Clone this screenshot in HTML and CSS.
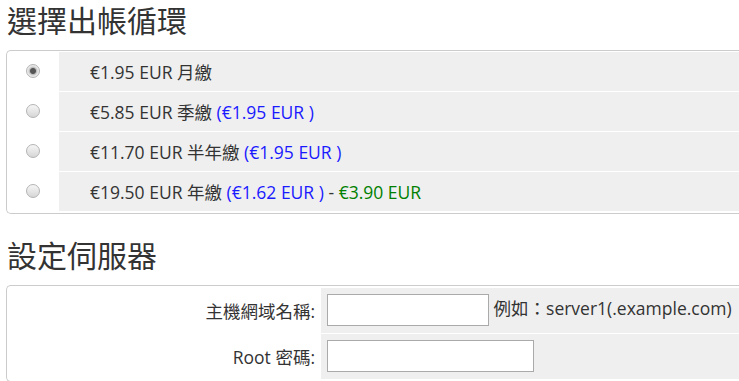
FILE: index.html
```html
<!DOCTYPE html>
<html>
<head>
	<title>Configure</title>
	<link rel="stylesheet" href="styles.css">
</head>
<body>
	<div class="page">
		<h2 class="title">選擇出帳循環</h2>
		<div class="cartbox">
			<label class="cycle">
				<span class="pick"><input type="radio" name="billingcycle" checked></span>
				<span class="desc">€1.95 EUR 月繳</span>
			</label>
			<label class="cycle">
				<span class="pick"><input type="radio" name="billingcycle"></span>
				<span class="desc">€5.85 EUR 季繳 <span class="permonth">(€1.95 EUR )</span></span>
			</label>
			<label class="cycle">
				<span class="pick"><input type="radio" name="billingcycle"></span>
				<span class="desc">€11.70 EUR 半年繳 <span class="permonth">(€1.95 EUR )</span></span>
			</label>
			<label class="cycle">
				<span class="pick"><input type="radio" name="billingcycle"></span>
				<span class="desc">€19.50 EUR 年繳 <span class="permonth">(€1.62 EUR )</span> - <span class="saving">€3.90 EUR</span></span>
			</label>
		</div>

		<h2 class="title second">設定伺服器</h2>
		<div class="cartbox serverbox">
			<div class="field-row">
				<label class="fieldlabel">主機網域名稱:</label>
				<div class="fieldarea"><input type="text" class="hostname"> 例如：server1(.example.com)</div>
			</div>
			<div class="field-row">
				<label class="fieldlabel">Root 密碼:</label>
				<div class="fieldarea"><input type="password" class="rootpw"></div>
			</div>
		</div>
	</div>
</body>
</html>
```

FILE: styles.css
```css
html, body {
	margin: 0;
	overflow: hidden;
}

body {
	background-color: #fff;
	color: #333;
	font-family: "Open Sans", "Noto Sans CJK TC", sans-serif;
	font-size: 17.5px;
}

.page {
	padding-left: 6px;
}

.title {
	margin: 3px 0 11px 1px;
	font-size: 30px;
	font-weight: normal;
	line-height: 36px;
	color: #333;
}

.title.second {
	margin-top: 24px;
}

.cartbox {
	border: 1px solid #ccc;
	border-right: none;
	border-radius: 5px 0 0 5px;
	padding: 1px 0 2px 0;
	display: flex;
	flex-direction: column;
	gap: 1px;
}

.cycle {
	display: flex;
	height: 39px;
}

.pick {
	width: 52px;
	display: flex;
	align-items: center;
	justify-content: center;
	padding-bottom: 2px;
	box-sizing: border-box;
}

.pick input {
	-webkit-appearance: none;
	appearance: none;
	margin: 0;
	width: 14px;
	height: 14px;
	border-radius: 50%;
	border: 1px solid #b4b4b4;
	background: linear-gradient(#f6f6f6, #d6d6d6);
}

.pick input:checked {
	background: radial-gradient(circle, #555 0, #555 2.5px, #bdbdbd 3.5px, #e6e6e6 5px, #f2f2f2 7px);
}

.desc {
	flex: 1;
	background-color: #efefef;
	display: flex;
	align-items: center;
	padding-left: 31px;
	white-space: pre;
}

.permonth {
	color: #1a1aff;
}

.saving {
	color: #008000;
}

.serverbox {
	padding-top: 2px;
}

.field-row {
	display: flex;
	height: 45px;
}

.fieldlabel {
	width: 314px;
	padding-right: 6px;
	box-sizing: border-box;
	display: flex;
	align-items: center;
	justify-content: flex-end;
}

.fieldarea {
	flex: 1;
	background-color: #efefef;
	padding: 6px 0 0 6px;
	box-sizing: border-box;
	white-space: pre;
}

.fieldarea input {
	box-sizing: border-box;
	height: 32px;
	border: 1px solid #aaa;
	margin: 0;
	padding: 2px 4px;
	font: inherit;
	vertical-align: middle;
}

.hostname {
	width: 162px;
}

.rootpw {
	width: 207px;
}
```
